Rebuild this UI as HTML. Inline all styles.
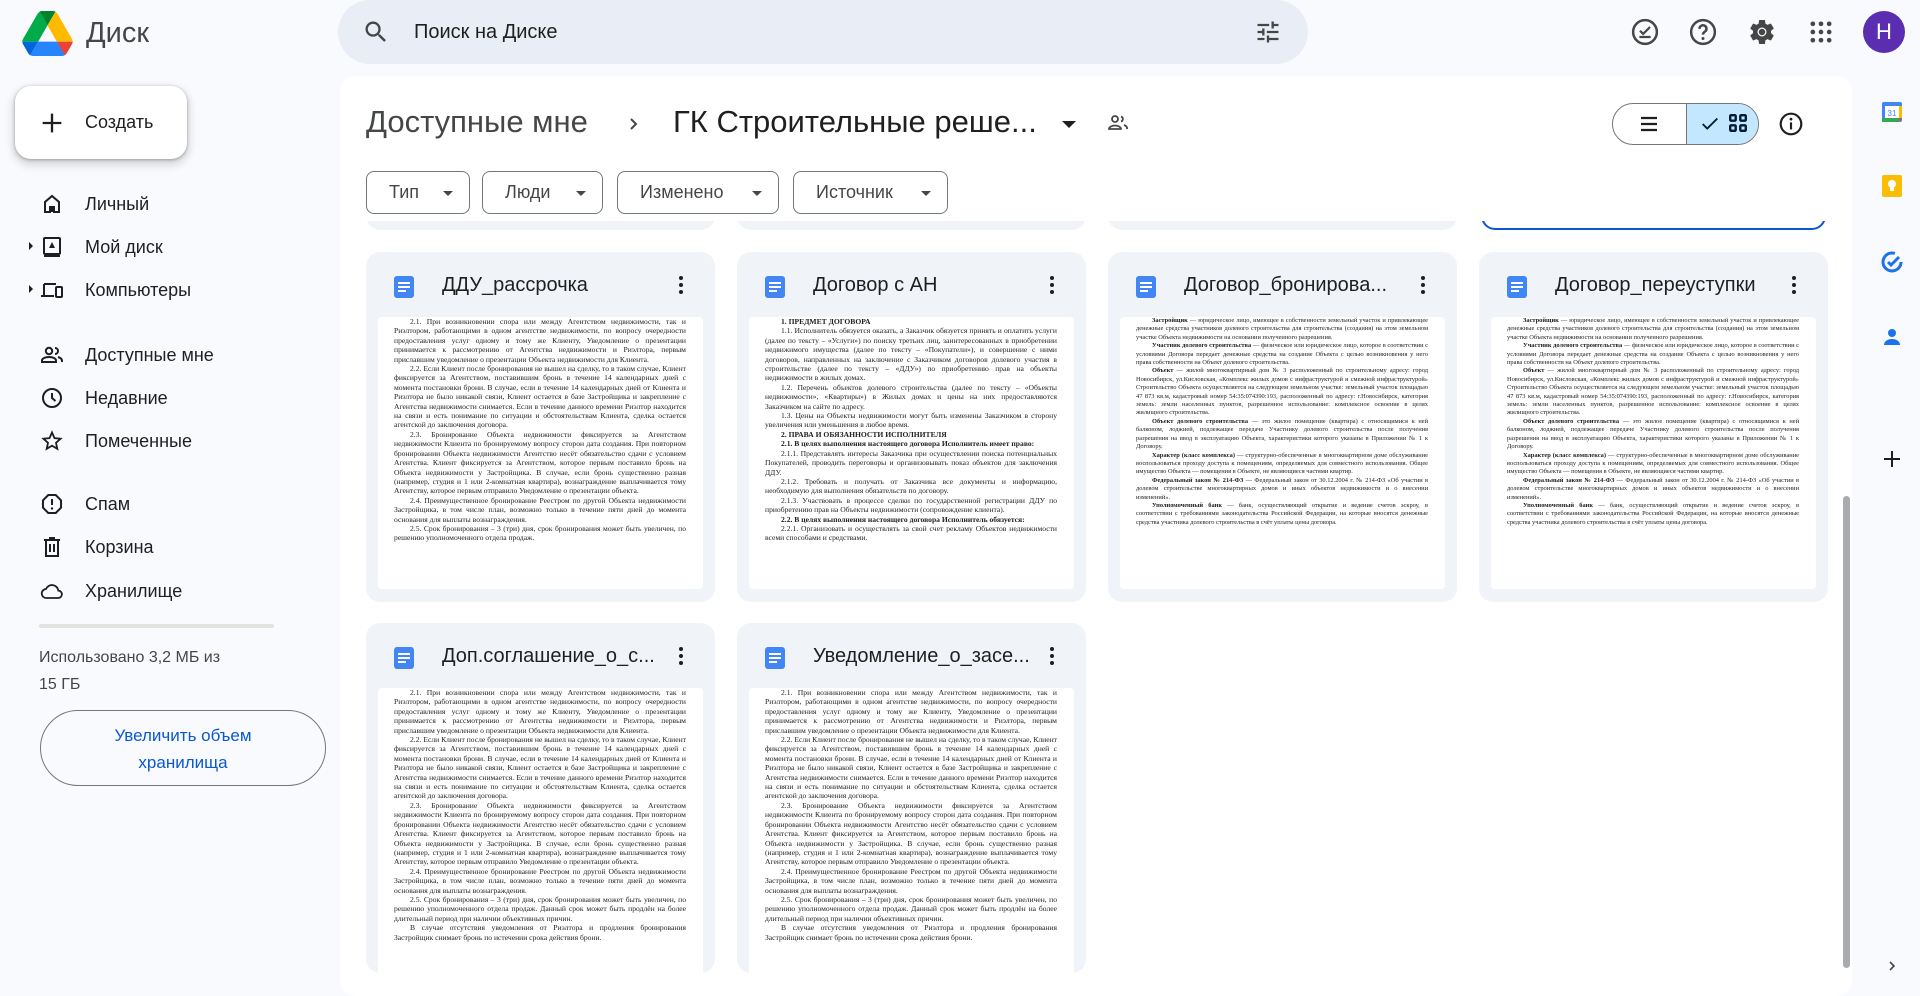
<!DOCTYPE html>
<html><head><meta charset="utf-8"><style>
*{box-sizing:border-box;margin:0;padding:0}
body{width:1920px;height:982px;overflow:hidden;background:#f8fafd;font-family:"Liberation Sans","DejaVu Sans",sans-serif;color:#1f1f1f;position:relative}
.abs{position:absolute}
.nav{position:absolute;left:0;width:320px;height:40px;display:flex;align-items:center;font-size:18px;color:#1f1f1f}
.nav svg{position:absolute;left:40px;width:24px;height:24px}
.nav span{position:absolute;left:85px}
.chip{position:absolute;top:171px;height:43px;border:1px solid #747775;border-radius:8px;font-size:18px;color:#444746;display:flex;align-items:center;padding-left:22px}
.chip:after{content:"";position:absolute;right:16px;top:19px;border-left:5px solid transparent;border-right:5px solid transparent;border-top:5px solid #444746}
.tile{position:absolute;width:349px;height:350px;background:#f0f4f9;border-radius:14px;overflow:hidden}
.tile .t{position:absolute;left:76px;top:22px;font-size:20px;color:#1f1f1f;white-space:nowrap;width:230px;overflow:hidden}
.tile .di{position:absolute;left:28px;top:24px;width:20px;height:22px;background:#4285f4;border-radius:3px}
.tile .di i{position:absolute;left:4px;height:2px;background:#fff;width:12px}
.tile .k{position:absolute;left:313px;top:24px;width:4px}
.tile .k b{display:block;width:4px;height:4px;border-radius:2px;background:#1f1f1f;margin-bottom:3px}
.tile .pv{position:absolute;left:12px;top:65px;width:325px;height:272px;background:#fff;border-radius:4px;overflow:hidden}
.doc{position:absolute;left:16px;top:0px;width:292px;font-family:"Liberation Serif",serif;font-size:7.6px;line-height:9.4px;color:#222;text-align:justify}
.doc p{text-indent:16px}
.ri{position:absolute;left:1880px;width:24px;height:24px}
.pb{position:absolute;top:214px;width:349px;height:16px;border-radius:0 0 14px 14px;background:#f0f4f9}
</style></head><body>

<svg class="abs" style="left:22px;top:11px" width="51" height="45" viewBox="0 0 87.3 78">
<path d="m6.6 66.85 3.85 6.65c.8 1.4 1.95 2.5 3.3 3.3l13.75-23.8h-27.5c0 1.55.4 3.1 1.2 4.5z" fill="#0066da"/>
<path d="m43.65 25-13.75-23.8c-1.35.8-2.5 1.9-3.3 3.3l-25.4 44a9.06 9.06 0 0 0 -1.2 4.5h27.5z" fill="#00ac47"/>
<path d="m73.55 76.8c1.35-.8 2.5-1.9 3.3-3.3l1.6-2.75 7.65-13.25c.8-1.4 1.2-2.95 1.2-4.5h-27.502l5.852 11.5z" fill="#ea4335"/>
<path d="m43.65 25 13.75-23.8c-1.35-.8-2.9-1.2-4.5-1.2h-18.5c-1.6 0-3.15.45-4.5 1.2z" fill="#00832d"/>
<path d="m59.8 53h-32.3l-13.75 23.8c1.35.8 2.9 1.2 4.5 1.2h50.8c1.6 0 3.15-.45 4.5-1.2z" fill="#2684fc"/>
<path d="m73.4 26.5-12.7-22c-.8-1.4-1.95-2.5-3.3-3.3l-13.75 23.8 16.15 28h27.45c0-1.55-.4-3.1-1.2-4.5z" fill="#ffba00"/>
</svg>
<div class="abs" style="left:86px;top:17px;font-size:29px;color:#444746">Диск</div>

<div class="abs" style="left:338px;top:0;width:970px;height:64px;background:#e9eef6;border-radius:32px"></div>
<svg class="abs" style="left:362px;top:18px" width="28" height="28" viewBox="0 0 24 24"><path fill="#444746" d="M15.5 14h-.79l-.28-.27A6.47 6.47 0 0016 9.5 6.5 6.5 0 109.5 16c1.61 0 3.09-.59 4.230-1.57l.27.28v.79l5 4.99L20.49 19l-4.99-5zm-6 0C7.01 14 5 11.99 5 9.5S7.01 5 9.5 5 14 7.01 14 9.5 11.99 14 9.5 14z"/></svg>
<div class="abs" style="left:414px;top:21px;font-size:20px;color:#1f1f1f">Поиск на Диске</div>
<svg class="abs" style="left:1254px;top:18px" width="28" height="28" viewBox="0 0 24 24"><path fill="#444746" d="M3 17v2h6v-2H3zM3 5v2h10V5H3zm10 16v-2h8v-2h-8v-2h-2v6h2zM7 9v2H3v2h4v2h2V9H7zm14 4v-2H11v2h10zm-6-4h2V7h4V5h-4V3h-2v6z"/></svg>

<svg class="abs" style="left:1630px;top:17px" width="30" height="30" viewBox="0 0 24 24"><circle cx="12" cy="12" r="9.5" fill="none" stroke="#444746" stroke-width="2"/><path d="M8 11l2.5 2.5L16 8M7.5 16h9" fill="none" stroke="#444746" stroke-width="1.8"/></svg>
<svg class="abs" style="left:1688px;top:17px" width="30" height="30" viewBox="0 0 24 24"><circle cx="12" cy="12" r="9.5" fill="none" stroke="#444746" stroke-width="2"/><path d="M9.2 9.5a2.8 2.8 0 115 1.6c-.9.8-2.2 1.3-2.2 3" fill="none" stroke="#444746" stroke-width="2"/><circle cx="12" cy="17.2" r="1.2" fill="#444746"/></svg>
<svg class="abs" style="left:1747px;top:17px" width="30" height="30" viewBox="0 0 24 24"><path fill="#444746" d="M19.14 12.94c.04-.3.06-.61.06-.94 0-.32-.02-.64-.07-.94l2.03-1.58a.49.49 0 00.12-.61l-1.92-3.32a.488.488 0 00-.59-.22l-2.39.96c-.5-.38-1.03-.7-1.62-.94l-.36-2.54a.484.484 0 00-.48-.41h-3.84c-.24 0-.43.17-.47.41l-.36 2.54c-.59.24-1.13.57-1.62.94l-2.39-.96c-.22-.08-.47 0-.59.22L2.74 8.87c-.12.21-.08.47.12.61l2.03 1.58c-.05.3-.09.63-.09.94s.02.64.07.94l-2.03 1.58a.49.49 0 00-.12.61l1.92 3.32c.12.22.37.29.59.22l2.39-.96c.5.38 1.03.7 1.62.94l.36 2.54c.05.24.24.41.48.41h3.84c.24 0 .44-.17.47-.41l.36-2.54c.59-.24 1.13-.56 1.62-.94l2.39.96c.22.08.47 0 .59-.22l1.92-3.32c.12-.22.07-.47-.12-.61l-2.01-1.58zM12 15.6A3.6 3.6 0 1112 8.4a3.6 3.6 0 010 7.2z"/><circle cx="12" cy="12" r="2.6" fill="#444746"/></svg>
<svg class="abs" style="left:1807px;top:18px" width="28" height="28" viewBox="0 0 24 24" fill="#444746"><circle cx="5" cy="5" r="2"/><circle cx="12" cy="5" r="2"/><circle cx="19" cy="5" r="2"/><circle cx="5" cy="12" r="2"/><circle cx="12" cy="12" r="2"/><circle cx="19" cy="12" r="2"/><circle cx="5" cy="19" r="2"/><circle cx="12" cy="19" r="2"/><circle cx="19" cy="19" r="2"/></svg>
<div class="abs" style="left:1863px;top:11px;width:42px;height:42px;border-radius:50%;background:#5b2db0;color:#fff;font-size:22px;text-align:center;line-height:42px">Н</div>

<div class="abs" style="left:15px;top:86px;width:172px;height:73px;background:#fff;border-radius:16px;box-shadow:0 1px 3px rgba(0,0,0,.3),0 4px 8px 3px rgba(0,0,0,.12)"></div>
<svg class="abs" style="left:38px;top:109px" width="28" height="28" viewBox="0 0 24 24"><path d="M12 4v16M4 12h16" stroke="#1f1f1f" stroke-width="2"/></svg>
<div class="abs" style="left:85px;top:112px;font-size:18px;color:#1f1f1f">Создать</div>

<div class="nav" style="top:184px"><svg viewBox="0 0 24 24"><path d="M5 20V10l7-6 7 6v10h-5v-5h-4v5z" fill="none" stroke="#1f1f1f" stroke-width="2"/><rect x="10" y="14" width="4" height="6" fill="#1f1f1f"/></svg><span>Личный</span></div>
<div class="nav" style="top:227px"><div class="abs" style="left:29px;top:15px;border-top:4px solid transparent;border-bottom:4px solid transparent;border-left:4px solid #1f1f1f"></div><svg viewBox="0 0 24 24"><rect x="4" y="3" width="16" height="16" rx="1" fill="none" stroke="#1f1f1f" stroke-width="2"/><path d="M4 21h16" stroke="#1f1f1f" stroke-width="2"/><path d="M12 7l3 6H9z" fill="#1f1f1f"/></svg><span>Мой диск</span></div>
<div class="nav" style="top:270px"><div class="abs" style="left:29px;top:15px;border-top:4px solid transparent;border-bottom:4px solid transparent;border-left:4px solid #1f1f1f"></div><svg viewBox="0 0 24 24" style="left:38px;width:28px"><path d="M4 6h12M4 6v11M1 18h13" fill="none" stroke="#1f1f1f" stroke-width="2"/><rect x="16" y="9" width="6" height="10" rx="1" fill="none" stroke="#1f1f1f" stroke-width="2"/></svg><span>Компьютеры</span></div>
<div class="nav" style="top:335px"><svg viewBox="0 0 24 24"><circle cx="9" cy="8" r="3.2" fill="none" stroke="#1f1f1f" stroke-width="2"/><path d="M2 19v-1.5c0-2 3-3.5 7-3.5s7 1.5 7 3.5V19z" fill="none" stroke="#1f1f1f" stroke-width="2"/><path d="M15 5a3 3 0 010 6M18 14c2 .7 4 1.6 4 3.5V19" fill="none" stroke="#1f1f1f" stroke-width="2"/></svg><span>Доступные мне</span></div>
<div class="nav" style="top:378px"><svg viewBox="0 0 24 24"><circle cx="12" cy="12" r="9" fill="none" stroke="#1f1f1f" stroke-width="2"/><path d="M12 7v5l3.5 3" fill="none" stroke="#1f1f1f" stroke-width="2"/></svg><span>Недавние</span></div>
<div class="nav" style="top:421px"><svg viewBox="0 0 24 24"><path d="M12 3.5l2.5 5.6 6.1.6-4.6 4.1 1.3 6L12 16.7l-5.3 3.1 1.3-6-4.6-4.1 6.1-.6z" fill="none" stroke="#1f1f1f" stroke-width="1.8"/></svg><span>Помеченные</span></div>
<div class="nav" style="top:484px"><svg viewBox="0 0 24 24"><path d="M8.3 3h7.4L21 8.3v7.4L15.7 21H8.3L3 15.7V8.3z" fill="none" stroke="#1f1f1f" stroke-width="2" stroke-linejoin="round"/><path d="M12 7v6" stroke="#1f1f1f" stroke-width="2"/><circle cx="12" cy="16.5" r="1.2" fill="#1f1f1f"/></svg><span>Спам</span></div>
<div class="nav" style="top:527px"><svg viewBox="0 0 24 24"><path d="M4 5h16M9 3h6M6 5v16h12V5M10 9v8M14 9v8" fill="none" stroke="#1f1f1f" stroke-width="2"/></svg><span>Корзина</span></div>
<div class="nav" style="top:571px"><svg viewBox="0 0 24 24" style="left:38px;width:28px"><path d="M6.5 19a4.5 4.5 0 01-.5-9 6.5 6.5 0 0112.4 1.6A3.7 3.7 0 0118 19z" fill="none" stroke="#1f1f1f" stroke-width="1.8"/></svg><span>Хранилище</span></div>
<div class="abs" style="left:39px;top:624px;width:235px;height:4px;background:#e1e3e1;border-radius:2px"></div>
<div class="abs" style="left:39px;top:644px;font-size:16px;color:#444746;line-height:27px">Использовано 3,2 МБ из<br>15 ГБ</div>
<div class="abs" style="left:40px;top:710px;width:286px;height:76px;border:1px solid #747775;border-radius:38px;color:#0b57d0;font-size:17px;text-align:center;line-height:27px;padding-top:11px">Увеличить объем<br>хранилища</div>

<div class="abs" style="left:340px;top:76px;width:1512px;height:920px;background:#fff;border-radius:16px"></div>

<div class="pb" style="left:366px"></div>
<div class="pb" style="left:737px"></div>
<div class="pb" style="left:1108px"></div>
<div class="abs" style="left:1481px;top:212px;width:345px;height:18px;border-radius:0 0 14px 14px;border:2px solid #0b57d0;border-top:0"></div>
<div class="abs" style="left:340px;top:76px;width:1512px;height:145px;background:#fff;border-radius:16px 16px 0 0"></div>

<div class="abs" style="left:366px;top:104px;font-size:31px;color:#444746">Доступные мне</div>
<svg class="abs" style="left:624px;top:112px" width="20" height="24" viewBox="0 0 20 24"><path d="M7 7l5 5-5 5" fill="none" stroke="#444746" stroke-width="2"/></svg>
<div class="abs" style="left:673px;top:104px;font-size:31px;color:#1f1f1f">ГК Строительные реше...</div>
<div class="abs" style="left:1062px;top:121px;border-left:7px solid transparent;border-right:7px solid transparent;border-top:7px solid #1f1f1f"></div>
<svg class="abs" style="left:1106px;top:111px" width="24" height="24" viewBox="0 0 24 24"><circle cx="9" cy="8" r="3" fill="none" stroke="#444746" stroke-width="1.8"/><path d="M3 18c0-2 3-3.5 6-3.5s6 1.5 6 3.5z" fill="none" stroke="#444746" stroke-width="1.8"/><path d="M15 5.5a2.6 2.6 0 010 5M18 14c1.6.6 3 1.5 3 3v1" fill="none" stroke="#444746" stroke-width="1.8"/></svg>

<div class="abs" style="left:1612px;top:103px;width:147px;height:42px;border:1px solid #747775;border-radius:21px;overflow:hidden;background:#fff">
<div class="abs" style="left:73px;top:0;width:74px;height:42px;background:#c2e7ff;border-left:1px solid #747775"></div></div>
<svg class="abs" style="left:1637px;top:112px" width="24" height="24" viewBox="0 0 24 24"><path d="M4 6h16M4 12h16M4 18h16" stroke="#1f1f1f" stroke-width="2.2"/></svg>
<svg class="abs" style="left:1699px;top:113px" width="22" height="22" viewBox="0 0 24 24"><path d="M4 12l5 5L20 6" fill="none" stroke="#001d35" stroke-width="2"/></svg>
<svg class="abs" style="left:1727px;top:112px" width="22" height="22" viewBox="0 0 24 24" fill="none" stroke="#001d35" stroke-width="2.6"><rect x="3.5" y="3.5" width="6" height="6" rx="1"/><rect x="14.5" y="3.5" width="6" height="6" rx="1"/><rect x="3.5" y="14.5" width="6" height="6" rx="1"/><rect x="14.5" y="14.5" width="6" height="6" rx="1"/></svg>
<svg class="abs" style="left:1778px;top:111px" width="26" height="26" viewBox="0 0 24 24"><circle cx="12" cy="12" r="9.5" fill="none" stroke="#1f1f1f" stroke-width="2"/><path d="M12 10.5v6.5" stroke="#1f1f1f" stroke-width="2"/><circle cx="12" cy="7.5" r="1.3" fill="#1f1f1f"/></svg>

<div class="chip" style="left:366px;width:104px">Тип</div>
<div class="chip" style="left:482px;width:121px">Люди</div>
<div class="chip" style="left:617px;width:162px">Изменено</div>
<div class="chip" style="left:793px;width:155px">Источник</div>

<div class="tile" style="left:366px;top:252px"><div class="di"><i style="top:6px"></i><i style="top:10px"></i><i style="top:14px;width:8px"></i></div><div class="t">ДДУ_рассрочка</div><div class="k"><b></b><b></b><b></b></div><div class="pv"><div class="doc">
<p>2.1. При возникновении спора или между Агентством недвижимости, так и Риэлтором, работающими в одном агентстве недвижимости, по вопросу очередности предоставления услуг одному и тому же Клиенту, Уведомление о презентации принимается к рассмотрению от Агентства недвижимости и Риэлтора, первым приславшим уведомление о презентации Объекта недвижимости для Клиента.</p>
<p>2.2. Если Клиент после бронирования не вышел на сделку, то в таком случае, Клиент фиксируется за Агентством, поставившим бронь в течение 14 календарных дней с момента постановки брони. В случае, если в течение 14 календарных дней от Клиента и Риэлтора не было никакой связи, Клиент остается в базе Застройщика и закрепление с Агентства недвижимости снимается. Если в течение данного времени Риэлтор находится на связи и есть понимание по ситуации и обстоятельствам Клиента, сделка остается агентской до заключения договора.</p>
<p>2.3. Бронирование Объекта недвижимости фиксируется за Агентством недвижимости Клиента по бронируемому вопросу сторон дата создания. При повторном бронировании Объекта недвижимости Агентство несёт обязательство сдачи с условием Агентства. Клиент фиксируется за Агентством, которое первым поставило бронь на Объекта недвижимости у Застройщика. В случае, если бронь существенно разная (например, студия и 1 или 2-комнатная квартира), вознаграждение выплачивается тому Агентству, которое первым отправило Уведомление о презентации объекта.</p>
<p>2.4. Преимущественное бронирование Реестром по другой Объекта недвижимости Застройщика, в том числе план, возможно только в течение пяти дней до момента основания для выплаты вознаграждения.</p>
<p>2.5. Срок бронирования – 3 (три) дня, срок бронирования может быть увеличен, по решению уполномоченного отдела продаж.</p></div></div></div>

<div class="tile" style="left:737px;top:252px"><div class="di"><i style="top:6px"></i><i style="top:10px"></i><i style="top:14px;width:8px"></i></div><div class="t">Договор с АН</div><div class="k"><b></b><b></b><b></b></div><div class="pv"><div class="doc">
<p><b>1. ПРЕДМЕТ ДОГОВОРА</b></p>
<p>1.1. Исполнитель обязуется оказать, а Заказчик обязуется принять и оплатить услуги (далее по тексту – «Услуги») по поиску третьих лиц, заинтересованных в приобретении недвижимого имущества (далее по тексту – «Покупатели»), и совершение с ними договоров, направленных на заключение с Заказчиком договоров долевого участия в строительстве (далее по тексту – «ДДУ») по приобретению прав на объекты недвижимости в жилых домах.</p>
<p>1.2. Перечень объектов долевого строительства (далее по тексту – «Объекты недвижимости», «Квартиры») в Жилых домах и цены на них предоставляются Заказчиком на сайте по адресу.</p>
<p>1.3. Цены на Объекты недвижимости могут быть изменены Заказчиком в сторону увеличения или уменьшения в любое время.</p>
<p><b>2. ПРАВА И ОБЯЗАННОСТИ ИСПОЛНИТЕЛЯ</b></p>
<p><b>2.1. В целях выполнения настоящего договора Исполнитель имеет право:</b></p>
<p>2.1.1. Представлять интересы Заказчика при осуществлении поиска потенциальных Покупателей, проводить переговоры и организовывать показ объектов для заключения ДДУ.</p>
<p>2.1.2. Требовать и получать от Заказчика все документы и информацию, необходимую для выполнения обязательств по договору.</p>
<p>2.1.3. Участвовать в процессе сделки по государственной регистрации ДДУ по приобретению прав на Объекты недвижимости (сопровождение клиента).</p>
<p><b>2.2. В целях выполнения настоящего договора Исполнитель обязуется:</b></p>
<p>2.2.1. Организовать и осуществлять за свой счет рекламу Объектов недвижимости всеми способами и средствами.</p></div></div></div>

<div class="tile" style="left:1108px;top:252px"><div class="di"><i style="top:6px"></i><i style="top:10px"></i><i style="top:14px;width:8px"></i></div><div class="t">Договор_бронирова...</div><div class="k"><b></b><b></b><b></b></div><div class="pv"><div class="doc" style="font-size:6.4px;line-height:8.4px">
<p><b>Застройщик</b> — юридическое лицо, имеющее в собственности земельный участок и привлекающее денежные средства участников долевого строительства для строительства (создания) на этом земельном участке Объекта недвижимости на основании полученного разрешения.</p>
<p><b>Участник долевого строительства</b> — физическое или юридическое лицо, которое в соответствии с условиями Договора передает денежные средства на создание Объекта с целью возникновения у него права собственности на Объект долевого строительства.</p>
<p><b>Объект</b> — жилой многоквартирный дом № 3 расположенный по строительному адресу: город Новосибирск, ул.Кисловская, «Комплекс жилых домов с инфраструктурой и смежной инфраструктурой» Строительство Объекта осуществляется на следующем земельном участке: земельный участок площадью 47 873 кв.м, кадастровый номер 54:35:074390:193, расположенный по адресу: г.Новосибирск, категория земель: земли населенных пунктов, разрешенное использование: комплексное освоение в целях жилищного строительства.</p>
<p><b>Объект долевого строительства</b> — это жилое помещение (квартира) с относящимися к ней балконом, лоджией, подлежащее передаче Участнику долевого строительства после получения разрешения на ввод в эксплуатацию Объекта, характеристики которого указаны в Приложении № 1 к Договору.</p>
<p><b>Характер (класс комплекса)</b> — структурно-обеспеченные в многоквартирном доме обслуживание воспользоваться проходу доступа к помещениям, определяемых для совместного использования. Общее имущество Объекта — помещения в Объекте, не являющиеся частями квартир.</p>
<p><b>Федеральный закон № 214-ФЗ</b> — Федеральный закон от 30.12.2004 г. № 214-ФЗ «Об участии в долевом строительстве многоквартирных домов и иных объектов недвижимости и о внесении изменений».</p>
<p><b>Уполномоченный банк</b> — банк, осуществляющий открытие и ведение счетов эскроу, в соответствии с требованиями законодательства Российской Федерации, на которые вносятся денежные средства участника долевого строительства в счёт уплаты цены договора.</p></div></div></div>

<div class="tile" style="left:1479px;top:252px"><div class="di"><i style="top:6px"></i><i style="top:10px"></i><i style="top:14px;width:8px"></i></div><div class="t">Договор_переуступки</div><div class="k"><b></b><b></b><b></b></div><div class="pv"><div class="doc" style="font-size:6.4px;line-height:8.4px">
<p><b>Застройщик</b> — юридическое лицо, имеющее в собственности земельный участок и привлекающее денежные средства участников долевого строительства для строительства (создания) на этом земельном участке Объекта недвижимости на основании полученного разрешения.</p>
<p><b>Участник долевого строительства</b> — физическое или юридическое лицо, которое в соответствии с условиями Договора передает денежные средства на создание Объекта с целью возникновения у него права собственности на Объект долевого строительства.</p>
<p><b>Объект</b> — жилой многоквартирный дом № 3 расположенный по строительному адресу: город Новосибирск, ул.Кисловская, «Комплекс жилых домов с инфраструктурой и смежной инфраструктурой» Строительство Объекта осуществляется на следующем земельном участке: земельный участок площадью 47 873 кв.м, кадастровый номер 54:35:074390:193, расположенный по адресу: г.Новосибирск, категория земель: земли населенных пунктов, разрешенное использование: комплексное освоение в целях жилищного строительства.</p>
<p><b>Объект долевого строительства</b> — это жилое помещение (квартира) с относящимися к ней балконом, лоджией, подлежащее передаче Участнику долевого строительства после получения разрешения на ввод в эксплуатацию Объекта, характеристики которого указаны в Приложении № 1 к Договору.</p>
<p><b>Характер (класс комплекса)</b> — структурно-обеспеченные в многоквартирном доме обслуживание воспользоваться проходу доступа к помещениям, определяемых для совместного использования. Общее имущество Объекта — помещения в Объекте, не являющиеся частями квартир.</p>
<p><b>Федеральный закон № 214-ФЗ</b> — Федеральный закон от 30.12.2004 г. № 214-ФЗ «Об участии в долевом строительстве многоквартирных домов и иных объектов недвижимости и о внесении изменений».</p>
<p><b>Уполномоченный банк</b> — банк, осуществляющий открытие и ведение счетов эскроу, в соответствии с требованиями законодательства Российской Федерации, на которые вносятся денежные средства участника долевого строительства в счёт уплаты цены договора.</p></div></div></div>

<div class="tile" style="left:366px;top:623px"><div class="di"><i style="top:6px"></i><i style="top:10px"></i><i style="top:14px;width:8px"></i></div><div class="t">Доп.соглашение_о_с...</div><div class="k"><b></b><b></b><b></b></div><div class="pv" style="height:300px"><div class="doc">
<p>2.1. При возникновении спора или между Агентством недвижимости, так и Риэлтором, работающими в одном агентстве недвижимости, по вопросу очередности предоставления услуг одному и тому же Клиенту, Уведомление о презентации принимается к рассмотрению от Агентства недвижимости и Риэлтора, первым приславшим уведомление о презентации Объекта недвижимости для Клиента.</p>
<p>2.2. Если Клиент после бронирования не вышел на сделку, то в таком случае, Клиент фиксируется за Агентством, поставившим бронь в течение 14 календарных дней с момента постановки брони. В случае, если в течение 14 календарных дней от Клиента и Риэлтора не было никакой связи, Клиент остается в базе Застройщика и закрепление с Агентства недвижимости снимается. Если в течение данного времени Риэлтор находится на связи и есть понимание по ситуации и обстоятельствам Клиента, сделка остается агентской до заключения договора.</p>
<p>2.3. Бронирование Объекта недвижимости фиксируется за Агентством недвижимости Клиента по бронируемому вопросу сторон дата создания. При повторном бронировании Объекта недвижимости Агентство несёт обязательство сдачи с условием Агентства. Клиент фиксируется за Агентством, которое первым поставило бронь на Объекта недвижимости у Застройщика. В случае, если бронь существенно разная (например, студия и 1 или 2-комнатная квартира), вознаграждение выплачивается тому Агентству, которое первым отправило Уведомление о презентации объекта.</p>
<p>2.4. Преимущественное бронирование Реестром по другой Объекта недвижимости Застройщика, в том числе план, возможно только в течение пяти дней до момента основания для выплаты вознаграждения.</p>
<p>2.5. Срок бронирования – 3 (три) дня, срок бронирования может быть увеличен, по решению уполномоченного отдела продаж. Данный срок может быть продлён на более длительный период при наличии объективных причин.</p>
<p>В случае отсутствия уведомления от Риэлтора и продления бронирования Застройщик снимает бронь по истечении срока действия брони.</p></div></div></div>

<div class="tile" style="left:737px;top:623px"><div class="di"><i style="top:6px"></i><i style="top:10px"></i><i style="top:14px;width:8px"></i></div><div class="t">Уведомление_о_засе...</div><div class="k"><b></b><b></b><b></b></div><div class="pv" style="height:300px"><div class="doc">
<p>2.1. При возникновении спора или между Агентством недвижимости, так и Риэлтором, работающими в одном агентстве недвижимости, по вопросу очередности предоставления услуг одному и тому же Клиенту, Уведомление о презентации принимается к рассмотрению от Агентства недвижимости и Риэлтора, первым приславшим уведомление о презентации Объекта недвижимости для Клиента.</p>
<p>2.2. Если Клиент после бронирования не вышел на сделку, то в таком случае, Клиент фиксируется за Агентством, поставившим бронь в течение 14 календарных дней с момента постановки брони. В случае, если в течение 14 календарных дней от Клиента и Риэлтора не было никакой связи, Клиент остается в базе Застройщика и закрепление с Агентства недвижимости снимается. Если в течение данного времени Риэлтор находится на связи и есть понимание по ситуации и обстоятельствам Клиента, сделка остается агентской до заключения договора.</p>
<p>2.3. Бронирование Объекта недвижимости фиксируется за Агентством недвижимости Клиента по бронируемому вопросу сторон дата создания. При повторном бронировании Объекта недвижимости Агентство несёт обязательство сдачи с условием Агентства. Клиент фиксируется за Агентством, которое первым поставило бронь на Объекта недвижимости у Застройщика. В случае, если бронь существенно разная (например, студия и 1 или 2-комнатная квартира), вознаграждение выплачивается тому Агентству, которое первым отправило Уведомление о презентации объекта.</p>
<p>2.4. Преимущественное бронирование Реестром по другой Объекта недвижимости Застройщика, в том числе план, возможно только в течение пяти дней до момента основания для выплаты вознаграждения.</p>
<p>2.5. Срок бронирования – 3 (три) дня, срок бронирования может быть увеличен, по решению уполномоченного отдела продаж. Данный срок может быть продлён на более длительный период при наличии объективных причин.</p>
<p>В случае отсутствия уведомления от Риэлтора и продления бронирования Застройщик снимает бронь по истечении срока действия брони.</p></div></div></div>

<div class="abs" style="left:1843px;top:496px;width:7px;height:472px;background:#a8abaf;border-radius:4px"></div>

<svg class="ri" style="top:100px" viewBox="0 0 24 24"><rect x="2" y="2" width="20" height="20" rx="2" fill="#4285f4"/><rect x="5" y="6" width="14" height="12" fill="#fff"/><rect x="2" y="18" width="17" height="4" fill="#34a853"/><rect x="19" y="6" width="3" height="12" fill="#fbbc04"/><path d="M19 18h3l-3 4z" fill="#ea4335"/><text x="12" y="16" font-size="8" fill="#4285f4" text-anchor="middle" font-family="Liberation Sans">31</text></svg>
<svg class="ri" style="top:174px" viewBox="0 0 24 24"><rect x="2" y="1" width="20" height="22" rx="2" fill="#fbbc04"/><circle cx="12" cy="10" r="4" fill="#fff"/><rect x="10" y="14" width="4" height="3" fill="#fff"/></svg>
<svg class="ri" style="top:250px" viewBox="0 0 24 24"><circle cx="12" cy="12" r="9" fill="none" stroke="#1a73e8" stroke-width="3" stroke-dasharray="45 12"/><path d="M8 12l3 3 8-8" fill="none" stroke="#1a73e8" stroke-width="3"/></svg>
<svg class="ri" style="top:325px" viewBox="0 0 24 24"><circle cx="12" cy="8" r="4" fill="#1a73e8"/><path d="M4 20c0-4 4-6 8-6s8 2 8 6z" fill="#1a73e8"/></svg>
<svg class="ri" style="top:447px" viewBox="0 0 24 24"><path d="M12 4v16M4 12h16" stroke="#1f1f1f" stroke-width="2"/></svg>
<svg class="abs" style="left:1884px;top:958px" width="16" height="16" viewBox="0 0 24 24"><path d="M9 6l6 6-6 6" fill="none" stroke="#444746" stroke-width="2.4"/></svg>
</body></html>
